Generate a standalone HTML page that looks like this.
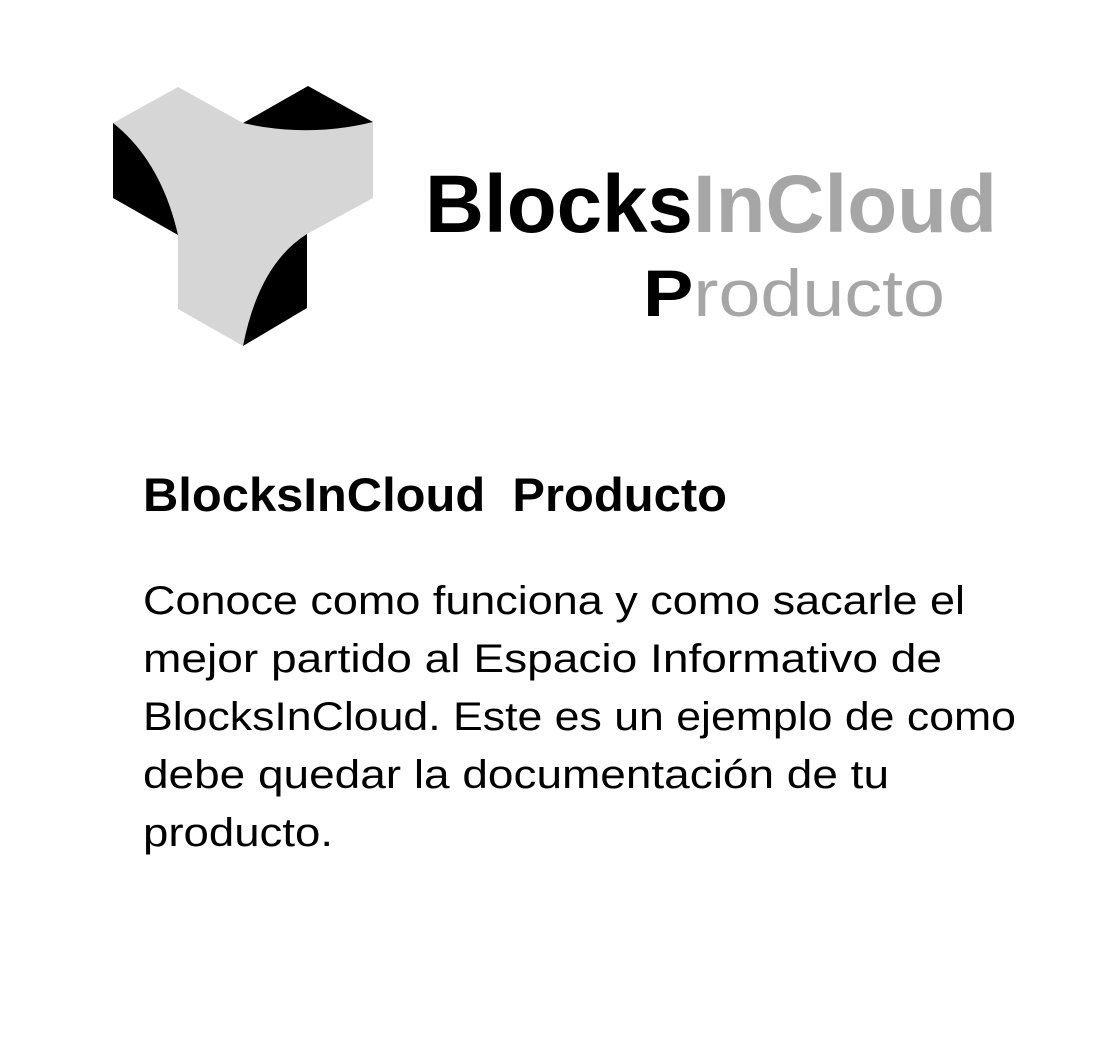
<!DOCTYPE html>
<html><head><meta charset="utf-8"><style>
html,body{margin:0;padding:0;background:#fff;width:1114px;height:1042px;overflow:hidden}
svg{display:block}
text{font-family:"Liberation Sans",sans-serif}
</style></head><body>
<svg width="1114" height="1042" viewBox="0 0 1114 1042">
<path d="M113,123 L178,87 L243,123 Q308,138 373,122 L373,198 L307,234 Q259,264 243,346 L178,309 L178,235 Q161,161 113,123 Z" fill="#d6d6d6"/>
<path d="M243,123 L308,86 L373,122 Q308,138 243,123 Z" fill="#000"/>
<path d="M113,123 Q161,161 178,235 L113,198 Z" fill="#000"/>
<path d="M307,234 L307,308 L243,346 Q259,264 307,234 Z" fill="#000"/>
<text x="425" y="232" font-size="82" font-weight="bold" textLength="572" lengthAdjust="spacingAndGlyphs"><tspan fill="#000">Blocks</tspan><tspan fill="#a6a6a6">InCloud</tspan></text>
<text x="643" y="316" font-size="66" textLength="302" lengthAdjust="spacingAndGlyphs"><tspan fill="#000" font-weight="bold">P</tspan><tspan fill="#a6a6a6">roducto</tspan></text>
<text x="143" y="511" font-size="47" font-weight="bold" textLength="584" lengthAdjust="spacingAndGlyphs" xml:space="preserve">BlocksInCloud  Producto</text>
<g font-size="40" fill="#000">
<text x="143" y="614" textLength="822" lengthAdjust="spacingAndGlyphs">Conoce como funciona y como sacarle el</text>
<text x="143" y="672" textLength="799" lengthAdjust="spacingAndGlyphs">mejor partido al Espacio Informativo de</text>
<text x="143" y="730" textLength="873" lengthAdjust="spacingAndGlyphs">BlocksInCloud. Este es un ejemplo de como</text>
<text x="143" y="788" textLength="746" lengthAdjust="spacingAndGlyphs">debe quedar la documentación de tu</text>
<text x="143" y="846" textLength="190" lengthAdjust="spacingAndGlyphs">producto.</text>
</g>
</svg>
</body></html>
